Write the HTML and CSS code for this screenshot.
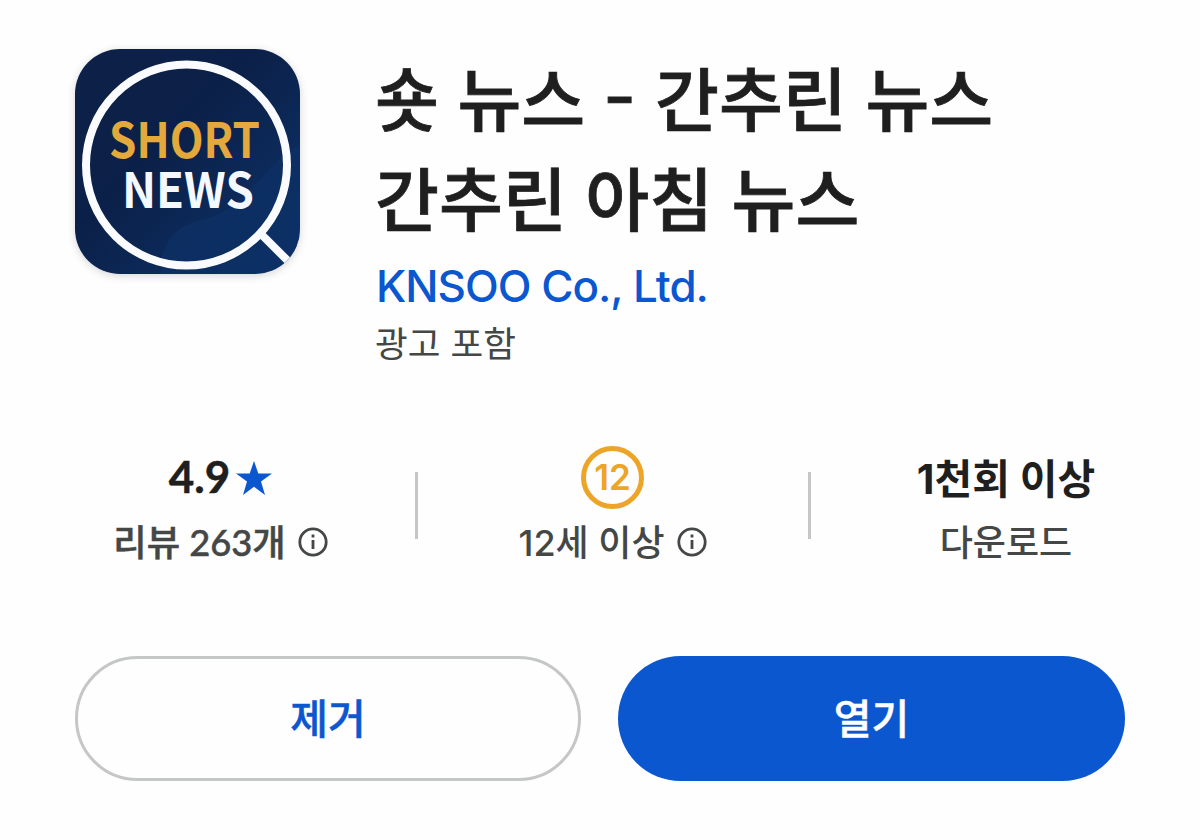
FILE: index.html
```html
<!DOCTYPE html>
<html lang="ko">

<head>
    <meta charset="UTF-8">
    <meta name="viewport" content="width=device-width, initial-scale=1.0">
    <title>숏 뉴스 - 간추린 뉴스</title>
    <link rel="stylesheet" href="styles.css">
</head>

<body>
    <header class="app-header">
        <svg class="app-icon" viewBox="0 0 225 225">
            <defs>
                <linearGradient id="navy" x1="0" y1="0" x2="1" y2="1">
                    <stop offset="0" stop-color="#0e2148" />
                    <stop offset="0.4" stop-color="#0b2048" />
                    <stop offset="0.7" stop-color="#0c2a5a" />
                    <stop offset="1" stop-color="#0b2e66" />
                </linearGradient>
            </defs>
            <rect width="225" height="225" fill="url(#navy)" />
            <path d="M86 225C84 195 100 175 130 170C170 160 195 110 225 95V225Z" fill="#0e3268" opacity="0.6" />
            <circle cx="111.500" cy="116" r="100.500" fill="none" stroke="#fafbff" stroke-width="8" />
            <path d="M185 184L218 217" stroke="#fafbff" stroke-width="8" />
            <text class="icon-text"><tspan class="icon-short" x="34" y="109" textLength="151" lengthAdjust="spacingAndGlyphs">SHORT</tspan><tspan class="icon-news" x="47" y="158.500" textLength="132" lengthAdjust="spacingAndGlyphs">NEWS</tspan></text>
        </svg>
        <div class="app-info">
            <h1>숏 뉴스 <span class="dash">-</span> 간추린 뉴스<br>간추린 아침 뉴스</h1>
            <a class="developer">KNSOO Co., Ltd.</a>
            <p class="ads">광고 포함</p>
        </div>
    </header>

    <section class="stats">
        <div class="stat">
            <div class="stat-value rating">4.9
                <svg class="star" viewBox="0 0 36 34">
                    <path d="M18 0L22.300 12.500H36L25 20.500L29 34L18 25.800L7 34L11 20.500L0 12.500H13.700Z" fill="#0b57d0" />
                </svg>
            </div>
            <div class="stat-label reviews">리뷰 263개
                <svg class="info" viewBox="0 0 30 30">
                    <circle cx="15" cy="15" r="13.200" />
                    <path d="M15 13V22M15 7.500V10.500" />
                </svg>
            </div>
        </div>
        <div class="stat">
            <div class="stat-value">
                <div class="age-badge">12</div>
            </div>
            <div class="stat-label">12세 이상
                <svg class="info" viewBox="0 0 30 30">
                    <circle cx="15" cy="15" r="13.200" />
                    <path d="M15 13V22M15 7.500V10.500" />
                </svg>
            </div>
        </div>
        <div class="stat">
            <div class="stat-value downloads">1천회 이상</div>
            <div class="stat-label">다운로드</div>
        </div>
    </section>

    <div class="actions">
        <button class="btn btn-outline" type="button">제거</button>
        <button class="btn btn-primary" type="button">열기</button>
    </div>
</body>

</html>
```
FILE: styles.css
```css
* {
    box-sizing: border-box;
}

body {
    margin: 0;
    padding: 49px 75px 0;
    height: 840px;
    background-color: #fefefe;
    color: #1f1f1f;
    font-family: Inter, "Noto Sans CJK KR", sans-serif;
    overflow: hidden;
}

.app-header {
    display: flex;
    gap: 75px;
    height: 374px;
}

.app-icon {
    width: 225px;
    height: 225px;
    flex: none;
    border-radius: 45px;
    box-shadow: 0 2px 8px rgba(0, 0, 0, 0.16);
}

.icon-text {
    font-family: "Noto Sans CJK KR", sans-serif;
    font-size: 48px;
    font-weight: 700;
}

.icon-short {
    fill: #e3a93c;
}

.icon-news {
    fill: #f4f8ff;
}

h1 {
    margin: -3px 0 0;
    font-family: "Noto Sans CJK KR", sans-serif;
    font-size: 69.5px;
    font-weight: 500;
    line-height: 100px;
    word-spacing: -1px;
    white-space: nowrap;
    -webkit-text-stroke: 0.8px #1f1f1f;
}

.dash {
    display: inline-block;
    margin: 0 5px 0 3px;
    transform: scaleX(1.25);
}

.developer {
    display: block;
    margin: 12px 0 0 1px;
    color: #0b57d0;
    font-size: 44px;
    font-weight: 500;
    letter-spacing: -1px;
    line-height: 56px;
}

.ads {
    margin: 6px 0 0;
    color: #444746;
    font-size: 35.6px;
    line-height: 50px;
}

.stats {
    display: grid;
    grid-template-columns: 343px 393px 1fr;
    height: 233px;
    padding-top: 23px;
}

.stat {
    position: relative;
    display: flex;
    flex-direction: column;
    align-items: center;
    height: 124px;
    white-space: nowrap;
}

.stat:first-child {
    padding-right: 52px;
}

.stat:nth-child(2) {
    padding-right: 4px;
}

.stat:last-child {
    padding-left: 76px;
}

.stat:not(:last-child)::after {
    content: "";
    position: absolute;
    right: 0;
    top: 26px;
    width: 3px;
    height: 67px;
    background-color: #c4c7c5;
}

.stat-value {
    display: flex;
    align-items: center;
    height: 64px;
    font-size: 42px;
    font-weight: 700;
}

.rating {
    padding-bottom: 3px;
    font-family: Lato, sans-serif;
    font-size: 44px;
    -webkit-text-stroke: 0.5px #1f1f1f;
}

.downloads {
    padding-bottom: 4px;
    font-size: 41px;
}

.star {
    width: 36px;
    height: 34px;
    margin: 4px 0 0 6px;
}

.stat-label {
    display: flex;
    align-items: center;
    gap: 12px;
    height: 62px;
    color: #444746;
    font-size: 36px;
    font-weight: 500;
}

.reviews {
    font-family: Lato, "Noto Sans CJK KR", sans-serif;
    font-size: 36.3px;
    -webkit-text-stroke: 0.5px #444746;
}

.info {
    width: 30px;
    height: 30px;
    margin-top: 4px;
    fill: none;
    stroke: #444746;
    stroke-width: 2.8;
}

.age-badge {
    width: 63px;
    height: 63px;
    border: 5px solid #eda528;
    border-radius: 50%;
    color: #eda528;
    font-size: 35px;
    font-weight: 600;
    line-height: 53px;
    text-align: center;
}

.actions {
    display: grid;
    grid-template-columns: 506px 507px;
    gap: 37px;
}

.btn {
    height: 125px;
    padding: 0 0 5px;
    border: none;
    border-radius: 63px;
    font-family: "Noto Sans CJK KR", sans-serif;
    font-size: 41px;
    font-weight: 500;
    -webkit-text-stroke: 0.5px;
}

.btn-outline {
    border: 3px solid #c4c7c5;
    background-color: #fefefe;
    color: #0b57d0;
}

.btn-primary {
    background-color: #0b57d0;
    color: #fff;
}
```
